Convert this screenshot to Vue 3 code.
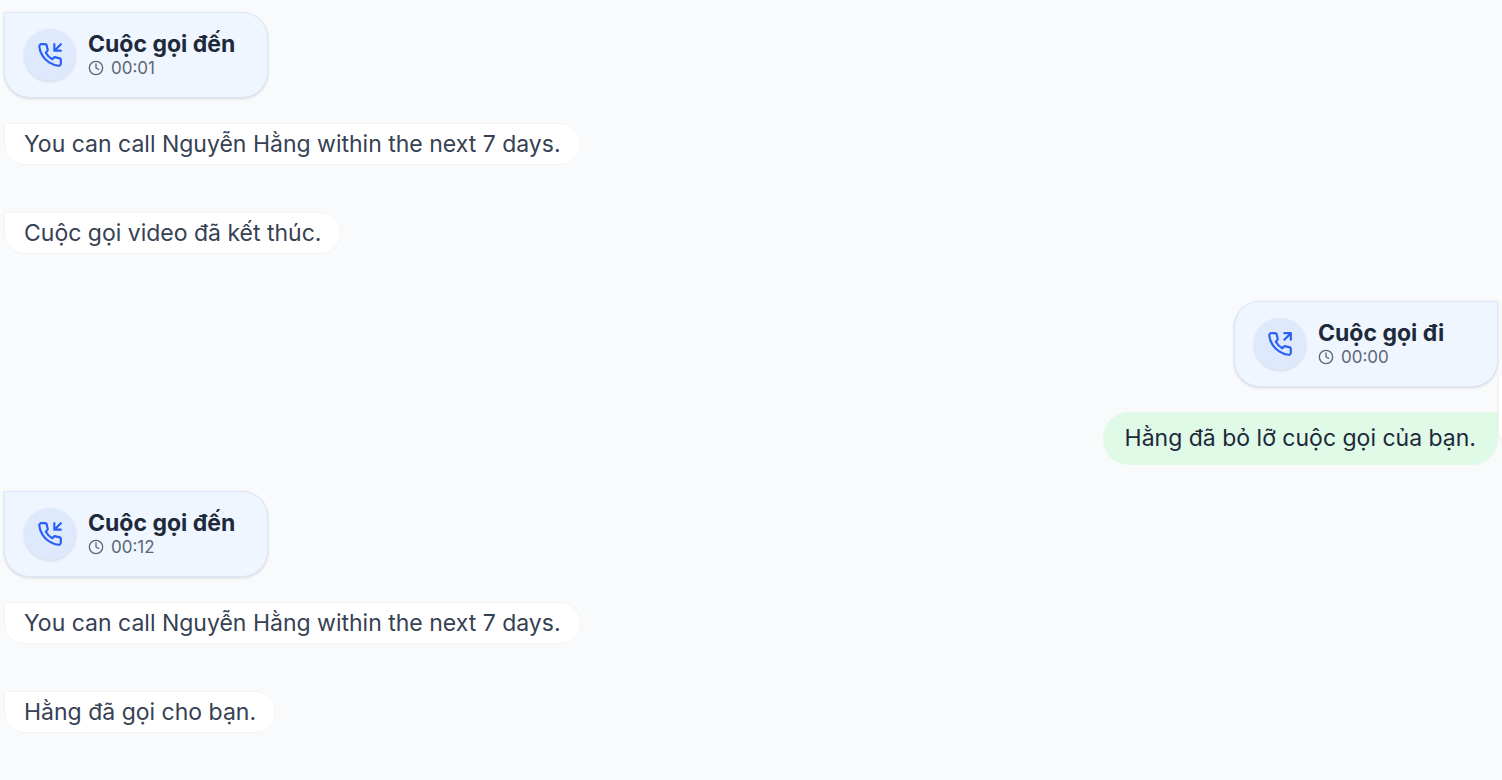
<script setup>
const messages = [
  { id: 1, kind: 'call', side: 'in', title: 'Cuộc gọi đến', time: '00:01' },
  { id: 2, kind: 'note', side: 'in', text: 'You can call Nguyễn Hằng within the next 7 days.' },
  { id: 3, kind: 'note', side: 'in', text: 'Cuộc gọi video đã kết thúc.' },
  { id: 4, kind: 'call', side: 'out', title: 'Cuộc gọi đi', time: '00:00' },
  { id: 5, kind: 'reply', side: 'out', text: 'Hằng đã bỏ lỡ cuộc gọi của bạn.' },
  { id: 6, kind: 'call', side: 'in', title: 'Cuộc gọi đến', time: '00:12' },
  { id: 7, kind: 'note', side: 'in', text: 'You can call Nguyễn Hằng within the next 7 days.' },
  { id: 8, kind: 'note', side: 'in', text: 'Hằng đã gọi cho bạn.' },
]
</script>

<template>
  <main class="chat">
    <div v-for="m in messages" :key="m.id" class="row" :class="[m.kind + '-row', m.side]">
      <article v-if="m.kind === 'call'" class="card">
        <span class="badge">
          <svg class="phone" viewBox="0 0 24 24" aria-hidden="true">
            <path v-if="m.side === 'in'" d="M16 2v6h6M22 2l-6 6" />
            <path v-else d="M16 2h6v6M16 8l6-6" />
            <path d="M22 16.92v3a2 2 0 0 1-2.18 2 19.79 19.79 0 0 1-8.63-3.07 19.5 19.5 0 0 1-6-6 19.79 19.79 0 0 1-3.07-8.67A2 2 0 0 1 4.11 2h3a2 2 0 0 1 2 1.72 12.84 12.84 0 0 0 .7 2.81 2 2 0 0 1-.45 2.11L8.09 9.91a16 16 0 0 0 6 6l1.27-1.27a2 2 0 0 1 2.11-.45 12.84 12.84 0 0 0 2.81.7A2 2 0 0 1 22 16.92z" />
          </svg>
        </span>
        <div class="info">
          <strong class="title">{{ m.title }}</strong>
          <span class="time">
            <svg class="clock" viewBox="0 0 24 24" aria-hidden="true">
              <circle cx="12" cy="12" r="10" />
              <path d="M12 6v6l4 2" />
            </svg>
            {{ m.time }}
          </span>
        </div>
      </article>
      <p v-else class="bubble" :class="m.kind">{{ m.text }}</p>
    </div>
    <div class="drawer"></div>
  </main>
</template>

<style>
body {
  background: #f9fafc;
}
</style>

<style scoped>
.chat {
  position: relative;
  box-sizing: border-box;
  min-height: 100vh;
  padding: 12px 4px 0;
  overflow: hidden;
  background: #f9fafc;
  color: #1e2939;
  font-family: Inter, "Noto Sans", sans-serif;
}
.row {
  display: flex;
}
.out {
  justify-content: flex-end;
}
.call-row {
  margin-bottom: 25px;
}
.note-row {
  margin-bottom: 47px;
}
.reply-row {
  margin-bottom: 26px;
}
.card {
  box-sizing: border-box;
  display: flex;
  align-items: center;
  gap: 12px;
  min-width: 264px;
  height: 86px;
  padding: 0 19px;
  border: 1px solid #dbe6fd;
  border-radius: 26px;
  background: #eff6ff;
  box-shadow: 0 1px 3px rgba(0, 0, 0, 0.14);
}
.in .card,
.in .bubble {
  border-top-left-radius: 0;
}
.out .card,
.out .bubble {
  border-top-right-radius: 0;
}
.badge {
  display: flex;
  align-items: center;
  justify-content: center;
  width: 52px;
  height: 52px;
  border-radius: 50%;
  background: #dfe9fd;
  box-shadow: 0 1px 3px rgba(0, 0, 0, 0.12);
}
svg {
  fill: none;
  stroke: currentColor;
  stroke-width: 2;
  stroke-linecap: round;
  stroke-linejoin: round;
}
.phone {
  width: 26px;
  height: 26px;
  color: #2860f8;
}
.info {
  display: flex;
  flex-direction: column;
}
.title {
  font-size: 23px;
  font-weight: 700;
  line-height: 26px;
}
.time {
  display: flex;
  align-items: center;
  gap: 7px;
  color: #5c6675;
  font-size: 17px;
  line-height: 22px;
}
.clock {
  width: 16px;
  height: 16px;
}
.bubble {
  margin: 0;
  font-size: 23px;
}
.note {
  padding: 0 19px;
  border: 1px solid #f3f4f6;
  border-radius: 21px;
  background: #fff;
  color: #364153;
  line-height: 40px;
}
.reply {
  padding: 0 22px;
  border-radius: 26px;
  background: #e0fae8;
  line-height: 53px;
}
.drawer {
  position: absolute;
  top: 369px;
  right: -48px;
  width: 51px;
  height: 74px;
  border-radius: 12px;
  background: #fff;
  box-shadow: 0 1px 4px rgba(0, 0, 0, 0.08);
}
</style>
